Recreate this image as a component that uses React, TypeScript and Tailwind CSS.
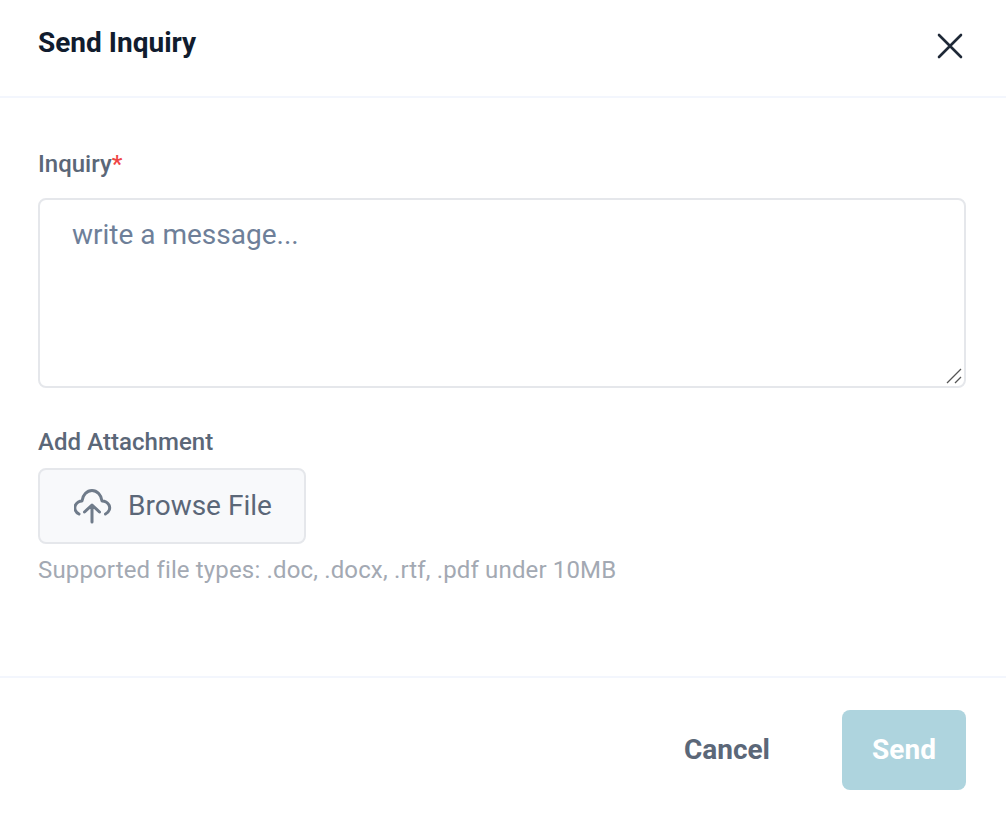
export default function App() {
  return (
    <div className="flex h-[814px] w-[1006px] flex-col bg-white font-['Roboto',sans-serif]">
      <header className="flex h-[98px] shrink-0 items-start justify-between border-b-2 border-[#f3f6fd] pl-[38px] pr-[40px] pt-[24px]">
        <h1 className="text-[28px] font-bold leading-[38px] text-[#111c2e]">Send Inquiry</h1>
        <button className="mt-[5px] mr-[-3px] text-[#1f2937]">
          <svg width="36" height="36" viewBox="0 0 36 36" fill="none" stroke="currentColor" strokeWidth="2.6" strokeLinecap="round">
            <path d="M6 6 L28 28 M28 6 L6 28" />
          </svg>
        </button>
      </header>
      <main className="flex flex-1 flex-col px-[38px] pr-[40px] pt-[52px]">
        <label className="text-[24px] font-medium leading-[28px] text-[#5b6778]">
          Inquiry<span className="text-[#ef4444]">*</span>
        </label>
        <div className="relative mt-[20px] h-[190px]">
          <textarea
            placeholder="write a message..."
            className="block h-full w-full resize-none rounded-[8px] border-2 border-[#e5e7eb] px-[32px] py-[15px] text-[28px] leading-[40px] text-[#374151] placeholder:text-[#6e7f99]"
          />
          <svg className="absolute bottom-[3px] right-[3px]" width="18" height="18" viewBox="0 0 18 18" fill="none" stroke="#555" strokeWidth="1.3">
            <path d="M2 16 L16 2 M10 16 L16 10" />
          </svg>
        </div>
        <label className="mt-[40px] text-[24px] font-medium leading-[28px] tracking-[0.05px] text-[#5b6778]">Add Attachment</label>
        <button className="mt-[12px] flex h-[76px] w-[268px] items-center gap-[16px] rounded-[8px] border-2 border-[#e5e7eb] bg-[#f8f9fb] pl-[34px] text-[28px] text-[#5b6778]">
          <svg width="38" height="38" viewBox="0 0 38 38" fill="none" stroke="#6f7b8a" strokeWidth="3" strokeLinecap="round" strokeLinejoin="round">
            <path d="M5 27 C1 25 0 21 1.5 18 C3 15.5 5.5 14 8 14 C8.5 8 13 3.5 18 3.5 C23 3.5 27.5 8 28 14 C31 14 33.5 15.5 35 18 C36.5 21 35.5 25 31.5 27" />
            <path d="M18 35 L18 18.5 M10.5 25 L18 18 L25.5 25" />
          </svg>
          Browse File
        </button>
        <p className="mt-[12px] text-[24px] leading-[28px] tracking-[0.15px] text-[#a3a9b3]">Supported file types: .doc, .docx, .rtf, .pdf under 10MB</p>
      </main>
      <footer className="mb-[1px] flex h-[137px] shrink-0 items-start justify-end border-t-2 border-[#f3f6fd] pr-[40px] pt-[32px]">
        <button className="mr-[72px] h-[80px] text-[28px] font-bold text-[#5b6778]">Cancel</button>
        <button className="h-[80px] w-[124px] rounded-[8px] bg-[#aed4de] text-[28px] font-bold text-white">Send</button>
      </footer>
    </div>
  );
}
